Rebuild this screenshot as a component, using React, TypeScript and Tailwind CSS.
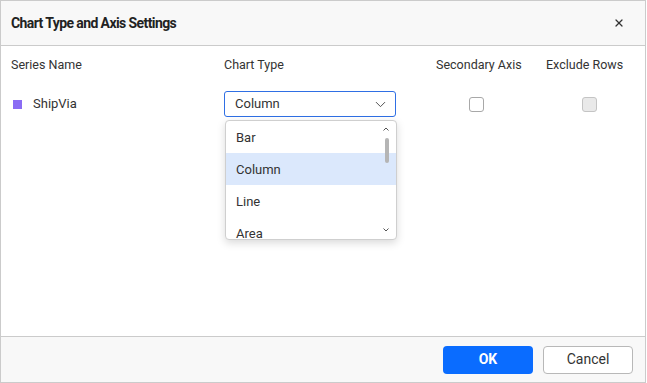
import { ChevronDown, X } from "lucide-react";

const options = ["Bar", "Column", "Line", "Area"];

function Caret({ up }: { up?: boolean }) {
  return (
    <svg width="6" height="4" viewBox="0 0 6 4" className="text-[#555]">
      <path
        d={up ? "M0.5 3.5 L3 1 L5.5 3.5" : "M0.5 0.5 L3 3 L5.5 0.5"}
        fill="none"
        stroke="currentColor"
        strokeWidth="1"
      />
    </svg>
  );
}

export default function App() {
  return (
    <div
      className="w-[647px] h-[383px] bg-white text-[#333]"
      style={{ fontFamily: "Roboto, 'Noto Sans', sans-serif" }}
    >
      <div className="flex h-[383px] w-[646px] flex-col border border-[#cbcbcb]">
        {/* header */}
        <div className="flex h-[45px] shrink-0 items-center justify-between border-b border-[#cbcbcb] bg-[#f8f8f8] pl-[10px] pr-[20px]">
          <span className="text-[14px] font-bold tracking-[-0.6px] text-[#222]">
            Chart Type and Axis Settings
          </span>
          <X size={12} strokeWidth={2.5} className="text-[#333]" />
        </div>

        {/* body */}
        <div className="relative flex-1 pl-[10px]">
          <div className="flex h-[25px] items-end text-[12.5px] leading-none">
            <div className="w-[213px]">Series Name</div>
            <div className="w-[212px]">Chart Type</div>
            <div className="w-[110px]">Secondary Axis</div>
            <div>Exclude Rows</div>
          </div>

          <div className="mt-[20px] flex h-[26px] items-center text-[13px]">
            <div className="flex w-[213px] items-center">
              <span className="ml-[2px] mr-[11px] h-[9px] w-[9px] bg-[#8a6cf4]" />
              <span>ShipVia</span>
            </div>
            <div className="flex h-[26px] w-[172px] items-center justify-between rounded-[3px] border border-[#2f6fe4] pl-[10px] pr-[6px]">
              <span>Column</span>
              <ChevronDown size={17} strokeWidth={1.3} className="text-[#444]" />
            </div>
            <div className="ml-[73px] h-[15px] w-[15px] rounded-[3px] border border-[#a8a8a8] bg-white" />
            <div className="ml-[98px] h-[15px] w-[15px] rounded-[3px] border border-[#c4c4c4] bg-[#e9e9e9]" />
          </div>

          {/* dropdown popup */}
          <div className="absolute left-[224px] top-[74px] h-[120px] w-[172px] overflow-hidden rounded-[4px] border border-[#cfcfcf] bg-white text-[13px] shadow-[0_3px_8px_rgba(0,0,0,0.15)]">
            {options.map((o) => (
              <div
                key={o}
                className={
                  "flex h-[32px] items-center pl-[10px] pt-[2px] " +
                  (o === "Column" ? "bg-[#dbe8fc]" : "")
                }
              >
                {o}
              </div>
            ))}
            <div className="absolute right-[7px] top-[6px] flex">
              <Caret up />
            </div>
            <div className="absolute right-[7px] top-[17px] h-[25px] w-[4px] rounded-full bg-[#b5b5b5]" />
            <div className="absolute bottom-[7px] right-[7px] flex">
              <Caret />
            </div>
          </div>
        </div>

        {/* footer */}
        <div className="flex h-[46px] shrink-0 items-center justify-end gap-[10px] border-t border-[#cbcbcb] bg-[#f8f8f8] pr-[12px]">
          <button className="h-[28px] w-[90px] rounded-[4px] bg-[#0a6cff] text-[14px] font-bold text-white">
            OK
          </button>
          <button className="h-[28px] w-[90px] rounded-[4px] border border-[#b8b8b8] bg-white text-[14px] text-[#333]">
            Cancel
          </button>
        </div>
      </div>
    </div>
  );
}
